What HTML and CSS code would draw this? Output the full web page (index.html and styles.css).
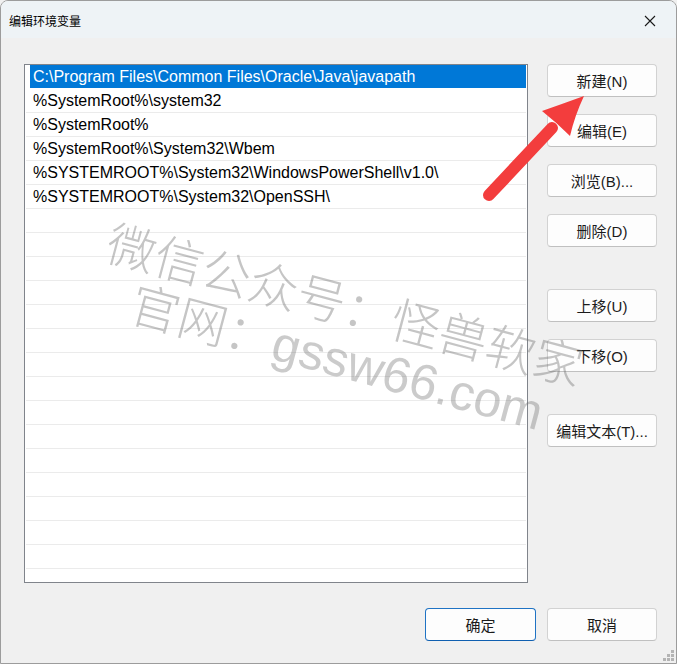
FILE: index.html
```html
<!DOCTYPE html>
<html lang="zh-CN">
<head>
<meta charset="utf-8">
<title>编辑环境变量</title>
<link rel="stylesheet" href="styles.css">
</head>
<body>
<div class="window">
  <div class="titlebar">
    <span class="title">编辑环境变量</span>
    <svg class="close" width="12" height="12" viewBox="0 0 12 12"><path d="M1 1 L11 11 M11 1 L1 11" stroke="#1a1a1a" stroke-width="1.1" fill="none"/></svg>
  </div>
  <div class="content">
    <div class="list">
      <div class="row selected">C:\Program Files\Common Files\Oracle\Java\javapath</div>
      <div class="row">%SystemRoot%\system32</div>
      <div class="row">%SystemRoot%</div>
      <div class="row">%SystemRoot%\System32\Wbem</div>
      <div class="row">%SYSTEMROOT%\System32\WindowsPowerShell\v1.0\</div>
      <div class="row">%SYSTEMROOT%\System32\OpenSSH\</div>
      <div class="row"></div><div class="row"></div><div class="row"></div><div class="row"></div>
      <div class="row"></div><div class="row"></div><div class="row"></div><div class="row"></div>
      <div class="row"></div><div class="row"></div><div class="row"></div><div class="row"></div>
      <div class="row"></div><div class="row"></div><div class="row"></div><div class="row"></div>
    </div>
    <div class="side">
      <div class="group">
        <button class="btn">新建(N)</button>
        <button class="btn">编辑(E)</button>
        <button class="btn">浏览(B)...</button>
        <button class="btn">删除(D)</button>
      </div>
      <div class="group">
        <button class="btn">上移(U)</button>
        <button class="btn">下移(O)</button>
      </div>
      <div class="group">
        <button class="btn">编辑文本(T)...</button>
      </div>
    </div>
  </div>
  <div class="footer">
    <button class="btn primary">确定</button>
    <button class="btn">取消</button>
  </div>
  <svg class="grip" width="12" height="12" viewBox="0 0 12 12">
    <rect x="8" y="0" width="3" height="3" fill="#b4b4b4"/>
    <rect x="4" y="4" width="3" height="3" fill="#b4b4b4"/>
    <rect x="8" y="4" width="3" height="3" fill="#b4b4b4"/>
    <rect x="0" y="8" width="3" height="3" fill="#b4b4b4"/>
    <rect x="4" y="8" width="3" height="3" fill="#b4b4b4"/>
    <rect x="8" y="8" width="3" height="3" fill="#b4b4b4"/>
  </svg>
  <div class="wm wm1">微信公众号：怪兽软家</div>
  <div class="wm wm2">官网：<span class="latin">gssw66.com</span></div>
  <svg class="arrow" width="677" height="664" viewBox="0 0 677 664">
    <line x1="489" y1="195" x2="552" y2="128" stroke="#f33d3d" stroke-width="12" stroke-linecap="round"/>
    <path d="M584 96 Q562 104 542 111 Q556 122 570 136 Q575 115 584 96 Z" fill="#f33d3d"/>
  </svg>
</div>
</body>
</html>
```
FILE: styles.css
```css
* { box-sizing: border-box; }
html, body { margin: 0; padding: 0; }
body {
  width: 677px;
  height: 664px;
  overflow: hidden;
  font-family: "Liberation Sans", "Noto Sans CJK SC", sans-serif;
  background: #f0f0f0;
}
.window {
  position: relative;
  width: 677px;
  height: 664px;
  background: #f0f0f0;
  border: 1px solid #9c9c9c;
  border-radius: 8px 8px 0 0;
  display: flex;
  flex-direction: column;
  overflow: hidden;
}
.titlebar {
  height: 37px;
  flex: none;
  background: #eef3f6;
  display: flex;
  align-items: center;
  justify-content: space-between;
  padding: 0 20px 0 8px;
}
.title {
  font-family: "Noto Sans CJK SC", sans-serif;
  font-size: 12px;
  color: #000;
  padding-top: 1px;
}
.close { display: block; margin-top: 2px; }
.content {
  display: flex;
  padding: 26px 0 0 23px;
  gap: 19px;
}
.list {
  width: 504px;
  height: 519px;
  flex: none;
  background: #fff;
  border: 1px solid #80848b;
  padding: 0 1px 0 1px;
  overflow: hidden;
}
.row {
  height: 24px;
  border-bottom: 1px solid #ebebeb;
  padding-left: 7px;
  font-size: 16px;
  line-height: 23px;
  color: #000;
  white-space: nowrap;
}
.row.selected {
  background: #0078d7;
  color: #fff;
  margin-left: 4px;
  padding-left: 3px;
  border-bottom-color: #fff;
}
.side {
  display: flex;
  flex-direction: column;
  gap: 42px;
}
.group {
  display: flex;
  flex-direction: column;
  gap: 17px;
}
.btn {
  width: 110px;
  height: 33px;
  background: #fdfdfd;
  border: 1px solid #d2d2d2;
  border-bottom-color: #c0c0c0;
  border-radius: 4px;
  font-family: "Liberation Sans", "Noto Sans CJK SC", sans-serif;
  font-size: 15px;
  color: #1b1b1b;
  padding: 0;
  margin: 0;
}
.footer {
  display: flex;
  justify-content: flex-end;
  gap: 11px;
  padding: 25px 19px 0 0;
}
.btn.primary {
  width: 111px;
  border-color: #1f73c4;
  border-bottom-color: #0f5fb0;
}
.grip {
  position: absolute;
  right: 1px;
  bottom: 1px;
}
.wm {
  position: absolute;
  font-family: "Noto Sans CJK SC", sans-serif;
  font-weight: 300;
  font-size: 49px;
  line-height: 50px;
  color: rgba(110, 110, 110, 0.4);
  white-space: nowrap;
  transform: rotate(15deg);
  transform-origin: 0 50%;
  pointer-events: none;
}
.wm1 { left: 108px; top: 213px; }
.wm2 { left: 131px; top: 274px; }
.wm2 .latin {
  font-family: "Liberation Sans", sans-serif;
  font-weight: 400;
  font-size: 50px;
  color: rgba(110, 110, 110, 0.36);
}
.arrow {
  position: absolute;
  left: -1px;
  top: -1px;
  pointer-events: none;
}
```
